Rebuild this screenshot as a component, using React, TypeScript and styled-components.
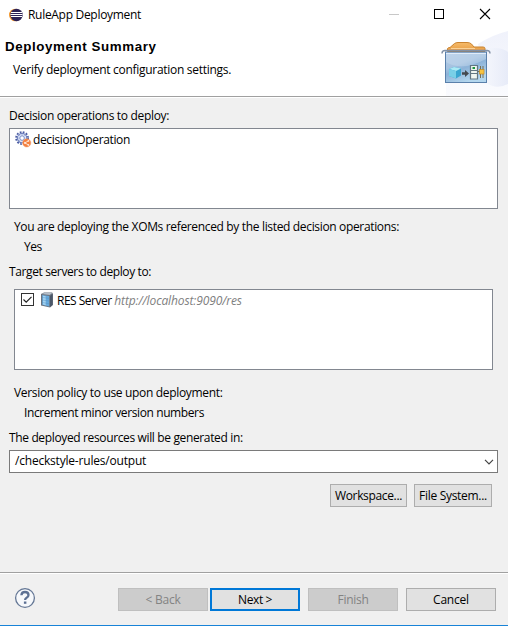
import React from "react";
import styled, { createGlobalStyle } from "styled-components";

const GlobalStyle = createGlobalStyle`
  * { box-sizing: border-box; }
  body { margin: 0; background: #f0f0f0; overflow: hidden; }
`;

const Dialog = styled.div`
  display: flex;
  flex-direction: column;
  width: 508px;
  height: 627px;
  background: #f0f0f0;
  color: #000;
  font-family: "Open Sans", "Segoe UI", sans-serif;
  font-size: 12px;
  line-height: 16px;
`;

const Text = styled.div<{ $track?: number; $indent?: number }>`
  height: 16px;
  line-height: 18px;
  white-space: nowrap;
  letter-spacing: ${(p) => p.$track ?? -0.33}px;
  margin-left: ${(p) => p.$indent ?? 0}px;
`;

const TitleBar = styled.div`
  display: flex;
  align-items: flex-start;
  height: 28px;
  padding: 6px 0 0 9px;
  background: #fff;
`;

const TitleText = styled(Text)`
  flex: 1;
  margin-left: 5px;
`;

const EclipseIcon = styled.svg`
  display: block;
  margin-top: 2px;
`;

const WindowControls = styled.div`
  display: flex;
  width: 119px;
  height: 16px;
  svg { display: block; }
`;

const Header = styled.header`
  display: flex;
  justify-content: space-between;
  height: 70px;
  background: #fff;
  border-bottom: 1px solid #fff;
  box-shadow: inset 0 -1px 0 #a0a0a0;
`;

const HeaderText = styled.div`
  padding: 11px 0 0 5px;
`;

const Heading = styled.h1`
  margin: 0 0 6px;
  height: 16px;
  font: bold 13.33px/16px "Liberation Sans", Arial, sans-serif;
  letter-spacing: 0.6px;
  white-space: nowrap;
`;

const Banner = styled.svg`
  display: block;
  height: 68px;
`;

const Content = styled.main`
  display: flex;
  flex-direction: column;
  flex: 1;
  padding: 9px 10px 0 9px;
`;

const ListBox = styled.div<{ $inset?: boolean }>`
  display: flex;
  align-items: flex-start;
  height: 81px;
  margin: ${(p) => (p.$inset ? "10px 5px 14px" : "5px 0 9px")};
  padding: 2px 5px;
  background: #fff;
  border: 1px solid #828790;
  svg { display: block; flex: none; }
`;

const Group = styled.section`
  display: flex;
  flex-direction: column;
  gap: 4px;
  margin-bottom: 9px;
`;

const Checkbox = styled.span`
  display: block;
  flex: none;
  width: 13px;
  height: 13px;
  margin: 1px 6px 0 1px;
  border: 1px solid #333;
  background: #fff;
`;

const Url = styled.span`
  color: #808080;
  font-style: italic;
  letter-spacing: -0.12px;
`;

const Combo = styled.div`
  display: flex;
  justify-content: space-between;
  height: 23px;
  margin-top: 5px;
  padding: 1px 3px 0 5px;
  background: #fff;
  border: 1px solid #7a7a7a;
`;

const BrowseRow = styled.div`
  display: flex;
  justify-content: flex-end;
  gap: 7px;
  margin: 11px 6px 0 0;
`;

const Button = styled.button<{ $width: number; $primary?: boolean; $track?: number }>`
  width: ${(p) => p.$width}px;
  height: 23px;
  padding: 0;
  border: ${(p) => (p.$primary ? "2px solid #0078d7" : "1px solid #adadad")};
  background: #e1e1e1;
  color: #000;
  font: inherit;
  line-height: ${(p) => (p.$primary ? 18 : 20)}px;
  letter-spacing: ${(p) => p.$track ?? -0.3}px;
  white-space: nowrap;
  &:disabled {
    background: #ccc;
    border-color: #bfbfbf;
    color: #838383;
  }
`;

const Footer = styled.footer`
  display: flex;
  align-items: flex-start;
  height: 53px;
  padding: 14px 12px 0 14px;
  border-top: 1px solid #a0a0a0;
  box-shadow: inset 0 1px 0 #fff;
`;

const HelpIcon = styled.svg`
  display: block;
  margin-right: auto;
`;

const FooterButtons = styled.div`
  display: flex;
  gap: 8px;
  padding-top: 1px;
`;

const NavPair = styled.div`
  display: flex;
  gap: 2px;
`;

const BottomEdge = styled.div`
  height: 2px;
  background: #fff;
  border-top: 1px solid #1883d7;
`;

const GearIcon = () => (
  <svg width="18" height="17" viewBox="0 0 18 18" preserveAspectRatio="xMinYMin">
    <circle cx="7.5" cy="7.5" r="6.4" fill="none" stroke="#4c5da3" strokeWidth="1.8" strokeDasharray="1.9 1.45" />
    <circle cx="7.5" cy="7.5" r="5" fill="#dde6f8" stroke="#6679b8" strokeWidth="1.1" />
    <circle cx="7.5" cy="7.5" r="2.4" fill="#fff" stroke="#7688c4" strokeWidth="1" />
    <path d="M7.5 2.5v2.5M2.5 7.5H5M4 4l2 2M11 4L9 6M4 11l2-2" stroke="#97a5d4" strokeWidth=".7" />
    <circle cx="12.4" cy="12.6" r="4.4" fill="#f4803f" stroke="#f0a27b" strokeWidth=".5" />
    <path d="M14.2 10.4l-3.600 2.200 3.600 2.200" fill="none" stroke="#ffe5d5" strokeWidth="1" />
    <circle cx="10.600" cy="12.600" r="1.100" fill="#ffe5d5" />
    <circle cx="14.200" cy="10.500" r=".9" fill="#ffe5d5" />
    <circle cx="14.200" cy="14.700" r=".9" fill="#ffe5d5" />
  </svg>
);

const ServerIcon = () => (
  <svg width="14" height="16" viewBox="0 0 14 16">
    <path d="M1 2L4 .5h8.2L13 2v11l-3 2.500L1 13.500z" fill="#6a737f" />
    <path d="M1.500 2l3-1h7.700l-2.500 2z" fill="#b4bdc7" />
    <path d="M2.200 3l7 .9v10.600l-7-1.700z" fill="#66a9dc" />
    <path d="M3 3.800l2.700.4v9L3 12.600z" fill="#a3d3f1" />
    <path d="M10 4l2.500-2v10.800L10 15z" fill="#4b5769" />
    <path d="M2.200 5.400l7 1M2.200 8l7 1.100M2.200 10.400l7 1.400" stroke="#4b89bd" strokeWidth=".4" />
  </svg>
);

const DeployBanner = () => (
  <Banner width="78" height="68" viewBox="430 28 78 68">
    <defs>
      <linearGradient id="haze" x1="0" y1="0" x2="1" y2="0">
        <stop offset="0" stopColor="#f4f6fc" />
        <stop offset="1" stopColor="#e7ebf8" />
      </linearGradient>
      <linearGradient id="hazeOuter" x1="0" y1="0" x2="0" y2="1">
        <stop offset="0" stopColor="#f0f2fb" />
        <stop offset="1" stopColor="#fafbfe" />
      </linearGradient>
      <linearGradient id="box" x1="0" y1="0" x2=".5" y2="1">
        <stop offset="0" stopColor="#b4cce6" />
        <stop offset=".45" stopColor="#a5c2e0" />
        <stop offset=".6" stopColor="#8db3d8" />
        <stop offset="1" stopColor="#b3d6ee" />
      </linearGradient>
      <linearGradient id="folder" x1="0" y1="0" x2="0" y2="1">
        <stop offset="0" stopColor="#f6bb69" />
        <stop offset="1" stopColor="#e69a42" />
      </linearGradient>
    </defs>
    <path d="M478 44Q492 35 508 31V96H446V83H488z" fill="url(#hazeOuter)" />
    <path d="M486 49Q500 46 508 52V84Q496 90 487 83z" fill="url(#haze)" />
    <path d="M447.500 51.500V48.500Q448 47.500 450 47.500L454.500 43.500Q456 42.500 458 42.500H467Q470 42.500 471.500 44L474 47H483Q485 47 485 48.500V51.500z" fill="url(#folder)" stroke="#ca832f" />
    <path d="M451 48.500h24" stroke="#fbd297" />
    <path d="M442 53.500Q442 50.500 445 50.500H487Q490 50.500 490 53.500" fill="none" stroke="#8291a6" strokeWidth="1.400" />
    <rect x="445.500" y="52" width="41" height="30.500" fill="url(#box)" stroke="#5a80ab" />
    <path d="M446 53.500h40" stroke="#e1ecf8" />
    <path d="M446 54H486V59Q462 72 446 62z" fill="#dbe7f4" opacity=".3" />
    <path d="M449 69l5-2 7 1.500v7l-5 3-7-2.500z" fill="#39a5d0" />
    <path d="M449 69l5-2 7 1.500-5 2.500z" fill="#abeaf5" />
    <path d="M449 69l7 2v7.500l-7-2.500z" fill="#79cfe7" />
    <path d="M462 72.200h3V70l4 3.500-4 3.500v-2.200h-3z" fill="#44494f" />
    <path d="M470.500 65.500h7v13.500h-7zM470.500 70.500h7M470.500 73.500h7" fill="#eef5f0" stroke="#617681" strokeWidth="1.200" />
    <path d="M472.500 68h2.500" stroke="#1c963e" strokeWidth="2" />
    <path d="M478 71.500h6M480.500 66v12M483 66v12" stroke="#776f55" strokeWidth="1" />
    <rect x="479.500" y="69.500" width="4.500" height="4.500" fill="#f6c341" stroke="#c68b23" strokeWidth=".7" />
  </Banner>
);

export default function App() {
  return (
    <>
      <GlobalStyle />
      <Dialog>
        <TitleBar>
          <EclipseIcon width="14" height="14" viewBox="0 0 14 14">
            <circle cx="6.300" cy="7" r="6.300" fill="#f4992f" />
            <circle cx="7.500" cy="7" r="6.200" fill="#2c2255" />
            <path d="M2 4.500h11M1.500 6.500h12M2 8.500h11" stroke="#fff" strokeWidth="1" />
          </EclipseIcon>
          <TitleText $track={-0.3}>RuleApp Deployment</TitleText>
          <WindowControls>
            <svg width="119" height="16" viewBox="0 0 119 16" fill="none">
              <path d="M0 8.500h10" stroke="#c8c8c8" />
              <rect x="45.500" y="3.500" width="9" height="9" stroke="#000" />
              <path d="M91 3l10 10M101 3L91 13" stroke="#000" strokeWidth="1.100" />
            </svg>
          </WindowControls>
        </TitleBar>
        <Header>
          <HeaderText>
            <Heading>Deployment Summary</Heading>
            <Text $indent={8} $track={-0.29}>Verify deployment configuration settings.</Text>
          </HeaderText>
          <DeployBanner />
        </Header>
        <Content>
          <Text $track={-0.32}>Decision operations to deploy:</Text>
          <ListBox>
            <GearIcon />
            <Text $track={-0.36}>decisionOperation</Text>
          </ListBox>
          <Group>
            <Text $indent={5} $track={-0.34}>
              You are deploying the XOMs referenced by the listed decision operations:
            </Text>
            <Text $indent={15} $track={-0.5}>Yes</Text>
          </Group>
          <Text $track={-0.38}>Target servers to deploy to:</Text>
          <ListBox $inset>
            <Checkbox>
              <svg width="11" height="11" viewBox="0 0 11 11">
                <path d="M1.500 5.500l2.700 2.700L9.500 2.800" fill="none" stroke="#222" strokeWidth="1.200" />
              </svg>
            </Checkbox>
            <ServerIcon />
            <Text $indent={3} $track={-0.5}>
              RES Server <Url>http://localhost:9090/res</Url>
            </Text>
          </ListBox>
          <Group>
            <Text $indent={5} $track={-0.33}>Version policy to use upon deployment:</Text>
            <Text $indent={15} $track={-0.39}>Increment minor version numbers</Text>
          </Group>
          <Text $track={-0.36}>The deployed resources will be generated in:</Text>
          <Combo>
            <Text $track={-0.2}>/checkstyle-rules/output</Text>
            <svg width="10" height="20" viewBox="0 0 10 20">
              <path d="M1 7.800l4 4 4-4" fill="none" stroke="#444" strokeWidth="1.200" />
            </svg>
          </Combo>
          <BrowseRow>
            <Button $width={77} $track={-0.35}>Workspace...</Button>
            <Button $width={78}>File System...</Button>
          </BrowseRow>
        </Content>
        <Footer>
          <HelpIcon width="22" height="22" viewBox="0 0 22 22">
            <circle cx="11" cy="11" r="9.400" fill="#f6f8fb" stroke="#647795" strokeWidth="1.300" />
            <path d="M7.400 8.200Q7.600 5 11 5t3.500 3q0 1.700-1.900 2.700-1.500.8-1.500 2.300" fill="none" stroke="#5c7093" strokeWidth="2.300" />
            <rect x="9.900" y="14.500" width="2.500" height="2.300" fill="#5c7093" />
          </HelpIcon>
          <FooterButtons>
            <NavPair>
              <Button $width={90} disabled $track={-0.25}>&lt; Back</Button>
              <Button $width={90} $primary $track={-0.4}>Next &gt;</Button>
            </NavPair>
            <Button $width={90} disabled>Finish</Button>
            <Button $width={90} $track={-0.2}>Cancel</Button>
          </FooterButtons>
        </Footer>
        <BottomEdge />
      </Dialog>
    </>
  );
}
